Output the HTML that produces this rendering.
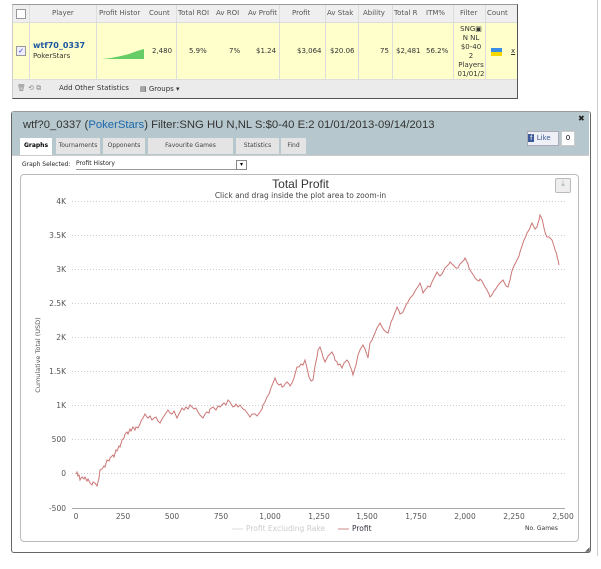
<!DOCTYPE html>
<html><head><style>
body{margin:0;width:601px;height:569px;background:#fff;position:relative;overflow:hidden;font-family:"DejaVu Sans",Verdana,sans-serif}
.a{position:absolute;white-space:nowrap}
.t{font-size:7px;color:#333}
.h{font-size:7px;color:#555}
</style></head><body>
<div class="a" style="left:597px;top:0;width:1px;height:556px;background:#ccc"></div>
<!-- top table -->
<div class="a" style="left:12px;top:4px;width:504px;height:93px;border:1px solid #555;border-top-color:#999;border-left-color:#ccc;background:#e8e8e8"></div>
<div class="a" style="left:13px;top:5px;width:504px;height:17px;background:#efefef;border-bottom:1px solid #ddd"></div>
<div class="a" style="left:13px;top:23px;width:504px;height:56px;background:#ffffcc;border-bottom:2px solid #ddd"></div>
<div class="a" style="left:13px;top:80px;width:504px;height:17px;background:#ebebeb"></div>
<div class="a" style="left:29px;top:5px;width:1px;height:75px;background:#ddd"></div>
<div class="a" style="left:96px;top:5px;width:1px;height:75px;background:#ddd"></div>
<div class="a" style="left:176px;top:5px;width:1px;height:75px;background:#ddd"></div>
<div class="a" style="left:279px;top:5px;width:1px;height:75px;background:#ddd"></div>
<div class="a" style="left:325px;top:5px;width:1px;height:75px;background:#ddd"></div>
<div class="a" style="left:358px;top:5px;width:1px;height:75px;background:#ddd"></div>
<div class="a" style="left:392px;top:5px;width:1px;height:75px;background:#ddd"></div>
<div class="a" style="left:453px;top:5px;width:1px;height:75px;background:#ddd"></div>
<div class="a" style="left:485px;top:5px;width:1px;height:75px;background:#ddd"></div>
<div class="a" style="left:16px;top:9px;width:8px;height:8px;border:1px solid #999;background:#fff"></div>
<div class="a" style="left:16px;top:46px;width:8px;height:8px;border:1px solid #999;background:#eef;font-size:7px;line-height:8px;color:#33c;text-align:center">✓</div>
<div class="a h" style="left:52px;top:9px">Player</div>
<div class="a h" style="left:99px;top:9px">Profit Histor</div>
<div class="a h" style="left:149px;top:9px">Count</div>
<div class="a h" style="left:178px;top:9px">Total ROI</div>
<div class="a h" style="left:216px;top:9px">Av ROI</div>
<div class="a h" style="left:248px;top:9px">Av Profit</div>
<div class="a h" style="left:292px;top:9px">Profit</div>
<div class="a h" style="left:327px;top:9px">Av Stak</div>
<div class="a h" style="left:363px;top:9px">Ability</div>
<div class="a h" style="left:394px;top:9px">Total R</div>
<div class="a h" style="left:426px;top:9px">ITM%</div>
<div class="a h" style="left:460px;top:9px">Filter</div>
<div class="a h" style="left:487px;top:9px">Count</div>
<div class="a" style="left:33px;top:41px;font-size:8px;font-weight:bold;color:#1a55a0">wtf70_0337</div>
<div class="a t" style="left:33px;top:52px">PokerStars</div>
<svg class="a" style="left:101px;top:46px" width="44" height="14"><polygon points="1,13 10,12 20,10 28,8 36,5 43,3 43,13" fill="#6c6"/></svg>
<div class="a t" style="left:152px;top:47px">2,480</div>
<div class="a t" style="left:189px;top:47px">5.9%</div>
<div class="a t" style="left:229px;top:47px">7%</div>
<div class="a t" style="left:256px;top:47px">$1.24</div>
<div class="a t" style="left:297px;top:47px">$3,064</div>
<div class="a t" style="left:330px;top:47px">$20.06</div>
<div class="a t" style="left:380px;top:47px">75</div>
<div class="a t" style="left:396px;top:47px">$2,481</div>
<div class="a t" style="left:426px;top:47px">56.2%</div>
<div class="a t" style="left:455px;top:25px;line-height:9px;text-align:center;width:32px">SNG▣<br>N NL<br>$0-40<br>2<br>Players<br>01/01/2</div>
<div class="a" style="left:491px;top:48px;width:11px;height:8px;background:linear-gradient(#3a8ee6 50%,#f5d800 50%)"></div>
<div class="a t" style="left:511px;top:47px;text-decoration:underline">x</div>
<div class="a t" style="left:17px;top:84px;color:#888">🗑 ⟲ ⧉</div>
<div class="a t" style="left:59px;top:84px">Add Other Statistics</div>
<div class="a t" style="left:140px;top:85px">▤ Groups ▾</div>
<!-- dialog -->
<div class="a" style="left:11px;top:111px;width:578px;height:440px;border:1px solid #666;border-top-color:#999;border-radius:3px;background:#fff"></div>
<div class="a" style="left:12px;top:112px;width:577px;height:43px;background:#b6c8ce;border-bottom:1px solid #ccc"></div>
<div class="a" style="left:23px;top:119px;font-family:'Liberation Sans',sans-serif;font-size:11.3px;color:#333">wtf?0_0337 (<span style="color:#1a66aa">PokerStars</span>) Filter:SNG HU N,NL S:$0-40 E:2 01/01/2013-09/14/2013</div>
<div class="a" style="left:578px;top:114px;font-size:8px;color:#222">✖</div>
<div class="a" style="left:527px;top:131px;width:30px;height:13px;background:#eef0f5;border:1px solid #aab;font-size:7px;line-height:13px;color:#3b5998"><span style="background:#3b5998;color:#fff;padding:0 2px">f</span> Like</div>
<div class="a" style="left:561px;top:131px;width:12px;height:13px;background:#fff;border:1px solid #ccc;font-size:7px;line-height:13px;text-align:center">0</div>
<div class="a" style="left:20px;top:138px;width:32px;height:17px;background:#fff;font-size:6px;line-height:16px;text-align:center;font-weight:bold">Graphs</div>
<div class="a" style="left:56px;top:138px;width:44px;height:16px;background:#e4e4e4;font-size:6px;line-height:16px;text-align:center;color:#444">Tournaments</div>
<div class="a" style="left:103px;top:138px;width:42px;height:16px;background:#e4e4e4;font-size:6px;line-height:16px;text-align:center;color:#444">Opponents</div>
<div class="a" style="left:148px;top:138px;width:85px;height:16px;background:#e4e4e4;font-size:6px;line-height:16px;text-align:center;color:#444">Favourite Games</div>
<div class="a" style="left:236px;top:138px;width:43px;height:16px;background:#e4e4e4;font-size:6px;line-height:16px;text-align:center;color:#444">Statistics</div>
<div class="a" style="left:281px;top:138px;width:25px;height:16px;background:#e4e4e4;font-size:6px;line-height:16px;text-align:center;color:#444">Find</div>
<div class="a" style="left:22px;top:161px;font-size:6px;color:#222">Graph Selected:</div>
<div class="a" style="left:76px;top:160px;width:171px;height:9px;border-bottom:1px solid #999;font-size:6px;color:#222">Profit History</div>
<div class="a" style="left:236px;top:160px;width:9px;height:8px;border:1px solid #888;font-size:6px;text-align:center;line-height:8px">▾</div>
<div class="a" style="left:20px;top:174px;width:557px;height:366px;border:1px solid #bbb;border-radius:4px"></div>
<div class="a" style="left:555px;top:178px;width:14px;height:13px;border:1px solid #bbb;border-radius:2px;background:#eee;font-size:8px;text-align:center;color:#9a9">⤓</div>
<div class="a" style="left:0;width:601px;top:177px;text-align:center;font-family:'Liberation Sans',sans-serif;font-size:12px;color:#333">Total Profit</div>
<div class="a" style="left:0;width:601px;top:191px;text-align:center;font-size:7.5px;color:#444">Click and drag inside the plot area to zoom-in</div>
<svg class="a" style="left:0;top:0" width="601" height="569" font-family="DejaVu Sans,sans-serif" font-size="7.5" fill="#555">
<g stroke="#ccc" stroke-dasharray="1,2">
<line x1="72" x2="565" y1="201.5" y2="201.5"/><line x1="72" x2="565" y1="235.5" y2="235.5"/><line x1="72" x2="565" y1="269.5" y2="269.5"/><line x1="72" x2="565" y1="303.5" y2="303.5"/><line x1="72" x2="565" y1="337.5" y2="337.5"/><line x1="72" x2="565" y1="371.5" y2="371.5"/><line x1="72" x2="565" y1="405.5" y2="405.5"/><line x1="72" x2="565" y1="439.5" y2="439.5"/><line x1="72" x2="565" y1="473.5" y2="473.5"/></g>
<line x1="72" x2="565" y1="508.5" y2="508.5" stroke="#aaa"/>
<g text-anchor="end"><text x="66" y="204">4K</text><text x="66" y="238">3.5K</text><text x="66" y="272">3K</text><text x="66" y="306">2.5K</text><text x="66" y="340">2K</text><text x="66" y="374">1.5K</text><text x="66" y="408">1K</text><text x="66" y="442">500</text><text x="66" y="476">0</text><text x="66" y="511">-500</text></g>
<g text-anchor="middle"><text x="76" y="519">0</text><text x="123" y="519">250</text><text x="172" y="519">500</text><text x="221" y="519">750</text><text x="270" y="519">1,000</text><text x="319" y="519">1,250</text><text x="367" y="519">1,500</text><text x="416" y="519">1,750</text><text x="465" y="519">2,000</text><text x="514" y="519">2,250</text><text x="563" y="519">2,500</text></g>
<text x="40" y="355" font-size="6.5" transform="rotate(-90 40 355)" text-anchor="middle">Cumulative Total (USD)</text>
<line x1="232" x2="243" y1="529" y2="529" stroke="#ddd"/><text x="246" y="531" fill="#ccc">Profit Excluding Rake</text>
<line x1="338" x2="349" y1="529" y2="529" stroke="#c88"/><text x="352" y="531" fill="#334">Profit</text>
<text x="525" y="530" font-size="6" fill="#333">No. Games</text>
<polyline fill="none" stroke="#c77" stroke-width="1" points="76,474 77,472 78,476 79,475 80,480 81,478 82,477 84,479 85,477 87,481 88,479 90,483 92,485 93,482 95,483 97,486 99,478 100,470 102,469 104,466 105,467 107,460 109,461 110,458 113,455 114,457 116,450 117,451 119,446 120,447 122,440 124,438 125,434 127,432 128,434 130,429 131,431 133,427 135,430 136,427 138,428 140,424 141,421 143,418 145,414 147,417 148,418 150,416 152,420 154,418 156,417 158,421 160,423 162,419 164,416 166,413 168,410 170,413 172,414 174,411 177,418 179,414 180,412 182,408 184,410 186,407 188,409 190,405 192,407 194,409 196,408 198,412 200,415 203,418 205,414 207,412 209,413 210,409 213,407 215,409 216,410 218,406 220,407 222,405 224,403 226,405 228,400 230,402 231,404 233,407 235,406 236,404 238,407 240,405 243,409 245,410 248,414 250,417 252,414 255,414 257,416 260,412 262,409 263,405 265,402 267,397 269,394 271,388 273,383 275,378 277,383 279,385 281,384 282,387 284,386 285,384 287,382 289,384 290,386 292,383 294,378 295,374 297,367 299,367 301,364 303,365 305,360 306,364 307,368 309,377 311,381 313,380 314,373 315,366 317,357 318,350 320,347 322,353 323,357 325,362 327,358 328,356 330,354 332,352 334,356 335,360 337,362 338,365 340,364 342,368 344,363 347,360 349,363 350,366 352,371 353,375 355,368 356,365 358,355 360,350 361,348 363,345 365,349 366,352 368,358 369,350 370,343 372,340 375,333 377,328 380,323 382,327 384,330 386,332 388,333 390,326 391,322 393,318 394,315 396,310 397,307 399,311 400,314 402,313 403,312 406,305 408,302 410,298 413,295 415,291 417,288 419,285 420,283 422,289 423,293 425,290 426,289 428,286 430,287 432,282 434,278 436,274 437,272 439,275 440,276 442,274 443,272 445,268 447,266 449,264 450,262 452,264 454,266 456,268 458,268 460,264 462,262 464,260 465,258 467,262 468,264 469,268 470,270 472,273 474,276 475,278 477,280 479,281 480,279 482,281 483,283 485,287 487,290 489,294 490,297 492,295 493,293 494,291 495,290 497,287 499,284 501,282 503,280 505,284 506,286 508,287 510,280 511,275 512,271 513,268 515,264 517,260 519,256 520,252 522,246 524,240 526,236 527,233 529,230 530,228 531,225 532,223 534,227 535,229 536,228 537,227 538,223 539,220 540,215 541,217 542,219 543,223 544,228 545,232 546,235 547,237 549,237 550,238 551,239 552,240 553,243 554,246 555,250 556,252 557,256 558,260 559,265"/>
</svg>
<div class="a" style="left:585px;top:546px;font-size:6px;color:#666">◢</div>
</body></html>
